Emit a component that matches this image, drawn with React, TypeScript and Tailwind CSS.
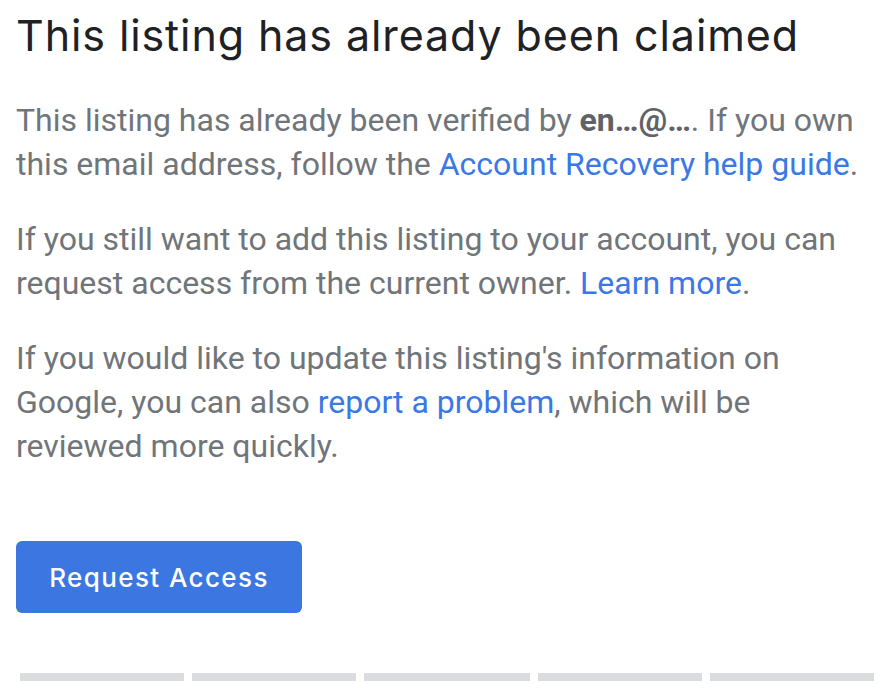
export default function App() {
  return (
    <div className="w-[890px] h-[698px] bg-white overflow-hidden font-['Roboto',sans-serif]">
      <div className="px-4 pt-[6px]">
        <h1 className="text-[43px] leading-[58px] text-[#202124] font-['Inter',sans-serif] tracking-[0.9px]">
          This listing has already been claimed
        </h1>

        <div className="mt-[34px] space-y-[31px] text-[32px] leading-[44px] text-[#70757a]">
          <p>
            This listing has already been verified by <b className="font-bold text-[#5f6368]">en…@…</b>. If you own
            this email address, follow the{" "}
            <a className="text-[#3b78e7]">Account Recovery help guide</a>.
          </p>
          <p>
            If you still want to add this listing to your account, you can request access from the current
            owner. <a className="text-[#3b78e7]">Learn more</a>.
          </p>
          <p>
            If you would like to update this listing's information on Google, you can also{" "}
            <a className="text-[#3b78e7]">report a problem</a>, which will be reviewed more quickly.
          </p>
        </div>

        <button className="mt-[73px] w-[286px] h-[72px] rounded-[6px] bg-[#3b76e1] text-white text-[26px] tracking-[1.4px] font-['Inter',sans-serif] font-medium">
          Request Access
        </button>
      </div>

      {/* placeholder bars */}
      <div className="mt-[60px] pl-5 flex gap-2">
        <div className="w-[164px] h-2 bg-[#dadce0]" />
        <div className="w-[164px] h-2 bg-[#dadce0]" />
        <div className="w-[166px] h-2 bg-[#dadce0]" />
        <div className="w-[164px] h-2 bg-[#dadce0]" />
        <div className="w-[164px] h-2 bg-[#dadce0]" />
      </div>
    </div>
  );
}
